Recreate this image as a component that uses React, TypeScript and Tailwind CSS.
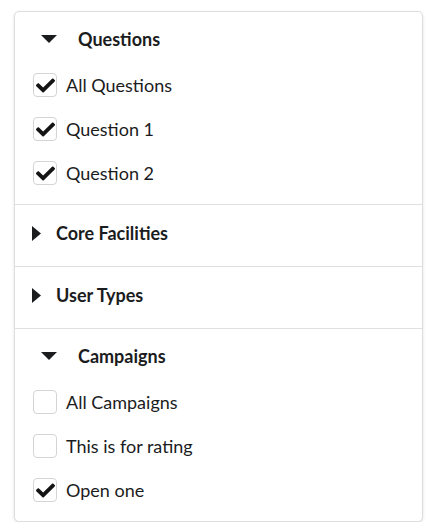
import React from 'react';
import { FaCheck } from 'react-icons/fa';

type Item = { label: string; checked: boolean };
type Section = { title: string; open: boolean; items: Item[] };

const sections: Section[] = [
  {
    title: 'Questions',
    open: true,
    items: [
      { label: 'All Questions', checked: true },
      { label: 'Question 1', checked: true },
      { label: 'Question 2', checked: true },
    ],
  },
  { title: 'Core Facilities', open: false, items: [] },
  { title: 'User Types', open: false, items: [] },
  {
    title: 'Campaigns',
    open: true,
    items: [
      { label: 'All Campaigns', checked: false },
      { label: 'This is for rating', checked: false },
      { label: 'Open one', checked: true },
    ],
  },
];

function Caret({ open }: { open: boolean }) {
  if (open) {
    return (
      <svg width="16" height="8" viewBox="0 0 16 8" className="ml-[9px] mr-[21px] shrink-0">
        <path d="M0 0 L16 0 L8 8 Z" fill="#1b1c1d" />
      </svg>
    );
  }
  return (
    <svg width="9" height="15" viewBox="0 0 9 15" className="mr-[15px] shrink-0">
      <path d="M0 0 L9 7.5 L0 15 Z" fill="#1b1c1d" />
    </svg>
  );
}

function Checkbox({ checked }: { checked: boolean }) {
  return (
    <div className="w-6 h-6 shrink-0 rounded-[4px] border border-[#d4d4d5] bg-white flex items-center justify-center">
      {checked && <FaCheck className="text-[#141414]" size={19} />}
    </div>
  );
}

export default function App() {
  return (
    <div className="pt-[11px] pl-[14px] font-['Lato','Liberation_Sans',sans-serif] text-[#1b1c1d]">
      <div className="w-[409px] bg-white border border-[#dedede] rounded-[5px] shadow-[0_1px_3px_rgba(0,0,0,0.12)]">
        {sections.map((s, i) => (
          <div
            key={s.title}
            className={`pl-[17px] ${s.open ? 'pt-[15px] pb-[9px]' : 'pt-4 pb-[21px]'} ${i > 0 ? 'border-t border-[#e0e0e0]' : ''}`}
          >
            <div className="h-6 flex items-center">
              <Caret open={s.open} />
              <span className="text-[18px] font-bold">{s.title}</span>
            </div>
            {s.open && (
              <div className="mt-[12px]">
                {s.items.map((it) => (
                  <div key={it.label} className="h-11 flex items-center pl-px">
                    <Checkbox checked={it.checked} />
                    <span className="ml-[9px] text-[18px]">{it.label}</span>
                  </div>
                ))}
              </div>
            )}
          </div>
        ))}
      </div>
    </div>
  );
}
